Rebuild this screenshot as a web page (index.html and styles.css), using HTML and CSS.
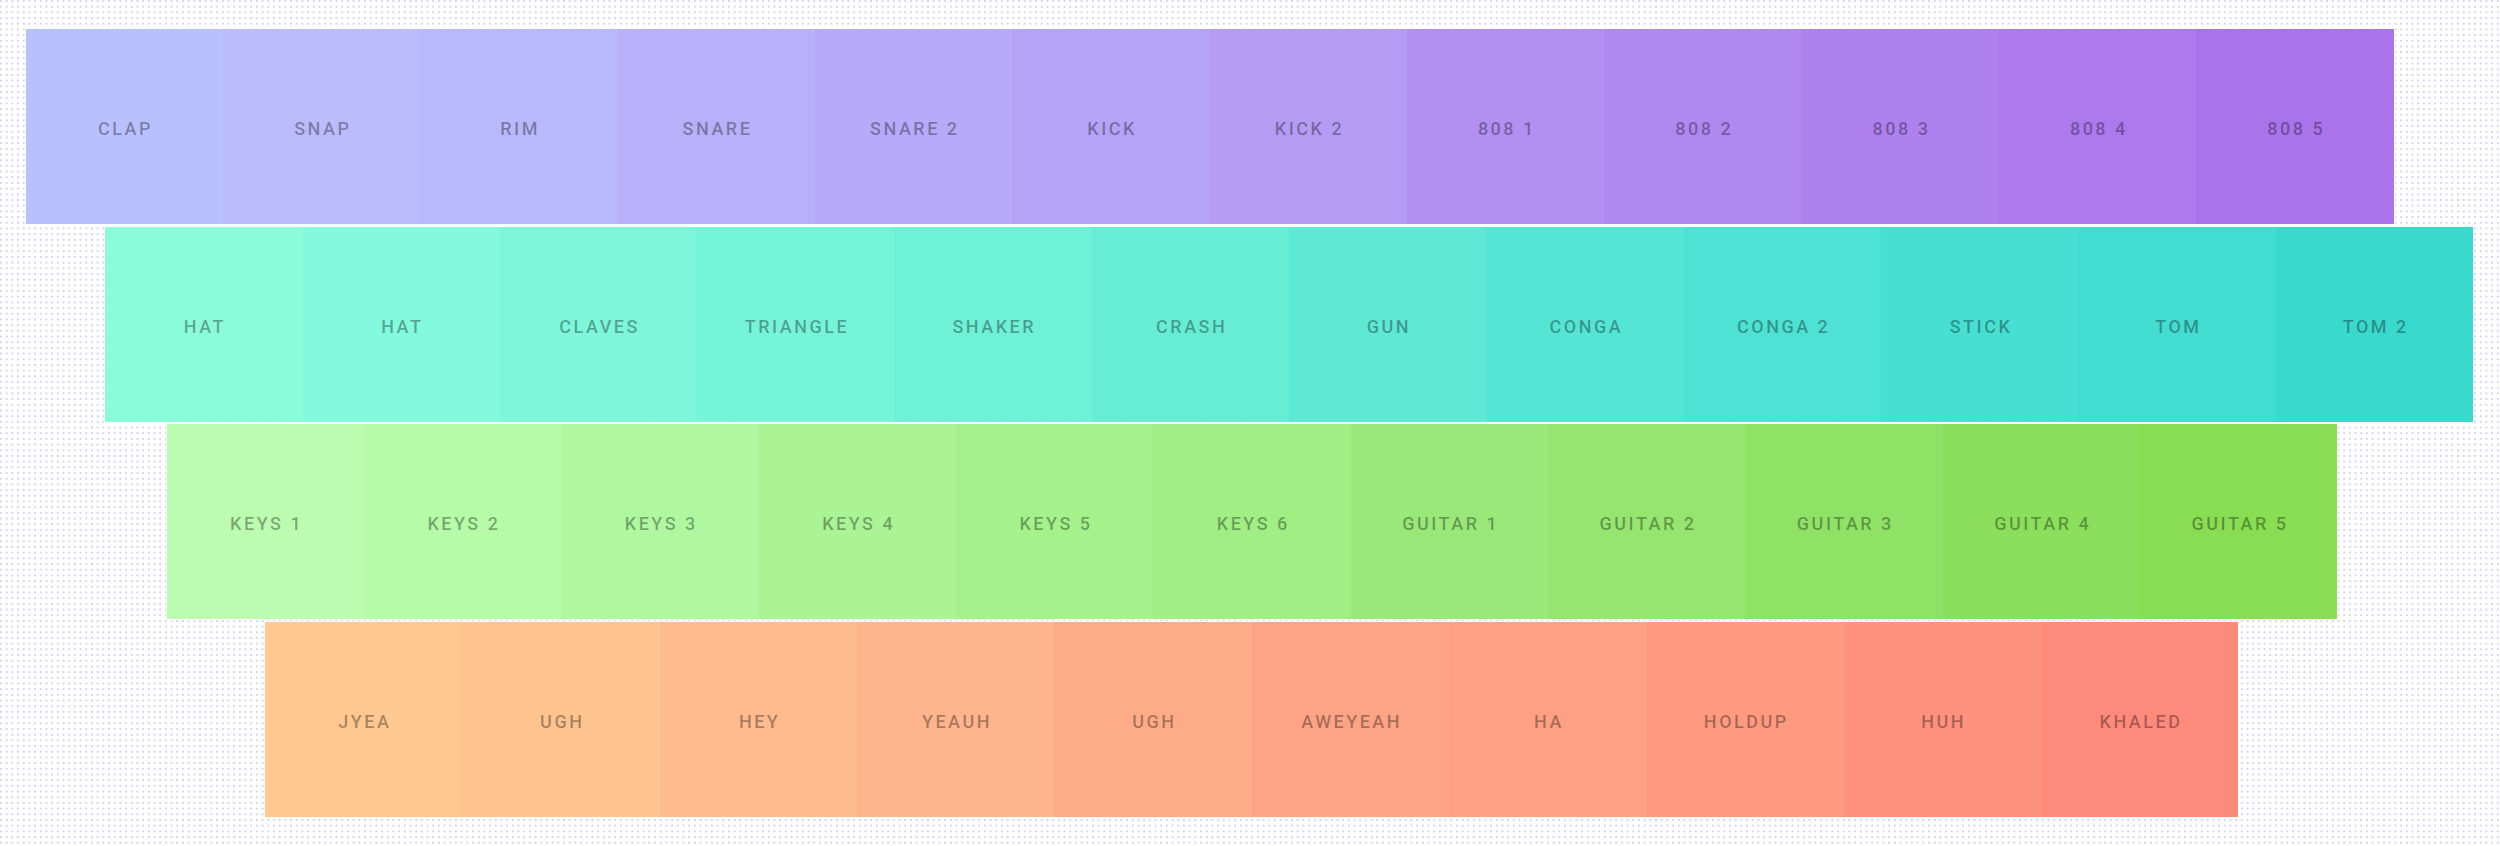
FILE: index.html
```html
<!DOCTYPE html>
<html lang="en">
<head>
<meta charset="utf-8">
<title>Pads</title>
<link rel="stylesheet" href="styles.css">
</head>
<body>
<main class="board">
  <div class="row row-drums">
    <div class="pad">CLAP</div><div class="pad">SNAP</div><div class="pad">RIM</div><div class="pad">SNARE</div><div class="pad">SNARE 2</div><div class="pad">KICK</div><div class="pad">KICK 2</div><div class="pad">808 1</div><div class="pad">808 2</div><div class="pad">808 3</div><div class="pad">808 4</div><div class="pad">808 5</div>
  </div>
  <div class="row row-perc">
    <div class="pad">HAT</div><div class="pad">HAT</div><div class="pad">CLAVES</div><div class="pad">TRIANGLE</div><div class="pad">SHAKER</div><div class="pad">CRASH</div><div class="pad">GUN</div><div class="pad">CONGA</div><div class="pad">CONGA 2</div><div class="pad">STICK</div><div class="pad">TOM</div><div class="pad">TOM 2</div>
  </div>
  <div class="row row-keys">
    <div class="pad">KEYS 1</div><div class="pad">KEYS 2</div><div class="pad">KEYS 3</div><div class="pad">KEYS 4</div><div class="pad">KEYS 5</div><div class="pad">KEYS 6</div><div class="pad">GUITAR 1</div><div class="pad">GUITAR 2</div><div class="pad">GUITAR 3</div><div class="pad">GUITAR 4</div><div class="pad">GUITAR 5</div>
  </div>
  <div class="row row-vox">
    <div class="pad">JYEA</div><div class="pad">UGH</div><div class="pad">HEY</div><div class="pad">YEAUH</div><div class="pad">UGH</div><div class="pad">AWEYEAH</div><div class="pad">HA</div><div class="pad">HOLDUP</div><div class="pad">HUH</div><div class="pad">KHALED</div>
  </div>
</main>
</body>
</html>
```

FILE: styles.css
```css
html, body {
  margin: 0;
  padding: 0;
}

body {
  width: 2500px;
  height: 846px;
  overflow: hidden;
  background-color: #ffffff;
  background-image: radial-gradient(circle at 1px 1px, #d2d2f2 0.85px, rgba(255,255,255,0) 1.25px);
  background-size: 5.7px 5.7px;
  font-family: Roboto, "Liberation Sans", sans-serif;
}

.board {
  display: flex;
  flex-direction: column;
  align-items: flex-start;
  gap: 2.6px;
  padding-top: 29px;
}

.row {
  display: flex;
  flex-wrap: nowrap;
  box-shadow: 0 0 0 1px rgba(255,255,255,0.85);
}

.row-drums { margin-left: 25.5px; box-shadow: 0 0 0 1px rgba(255,255,255,0.85), inset 0 -1px 0 rgba(120,90,220,0.25); }
.row-perc  { margin-left: 105px; }
.row-keys  { margin-left: 166.7px; }
.row-vox   { margin-left: 265px; }

.pad {
  flex: 0 0 auto;
  width: 197.35px;
  height: 195px;
  display: flex;
  align-items: center;
  justify-content: center;
  padding-top: 4px;
  box-sizing: border-box;
  font-size: 18px;
  font-weight: 500;
  letter-spacing: 2.5px;
  text-indent: 2.5px;
  color: rgba(0, 0, 0, 0.34);
  white-space: nowrap;
}

/* drums row */
.row-drums .pad:nth-child(1)  { background: #b9c0fe; }
.row-drums .pad:nth-child(2)  { background: #bcbcfc; }
.row-drums .pad:nth-child(3)  { background: #b9b8fb; }
.row-drums .pad:nth-child(4)  { background: #b8b1f9; }
.row-drums .pad:nth-child(5)  { background: #b7aaf8; }
.row-drums .pad:nth-child(6)  { background: #b5a3f7; }
.row-drums .pad:nth-child(7)  { background: #b49cf4; }
.row-drums .pad:nth-child(8)  { background: #b28ff0; }
.row-drums .pad:nth-child(9)  { background: #b088ef; }
.row-drums .pad:nth-child(10) { background: #ae81ee; }
.row-drums .pad:nth-child(11) { background: #ac7aec; }
.row-drums .pad:nth-child(12) { background: #a974ea; }

/* percussion row */
.row-perc .pad:nth-child(1)  { background: #8afcd9; }
.row-perc .pad:nth-child(2)  { background: #82fadb; }
.row-perc .pad:nth-child(3)  { background: #7df6d9; }
.row-perc .pad:nth-child(4)  { background: #75f4d8; }
.row-perc .pad:nth-child(5)  { background: #6ef1d7; }
.row-perc .pad:nth-child(6)  { background: #67edd6; }
.row-perc .pad:nth-child(7)  { background: #5ee9d6; }
.row-perc .pad:nth-child(8)  { background: #55e5d4; }
.row-perc .pad:nth-child(9)  { background: #4de2d3; }
.row-perc .pad:nth-child(10) { background: #46dfd1; }
.row-perc .pad:nth-child(11) { background: #42dcd0; }
.row-perc .pad:nth-child(12) { background: #3ad9ce; }

/* keys row */
.row-keys .pad:nth-child(1)  { background: #bcfcb0; }
.row-keys .pad:nth-child(2)  { background: #b5fba8; }
.row-keys .pad:nth-child(3)  { background: #b0f8a0; }
.row-keys .pad:nth-child(4)  { background: #abf495; }
.row-keys .pad:nth-child(5)  { background: #a5f28c; }
.row-keys .pad:nth-child(6)  { background: #a0ee84; }
.row-keys .pad:nth-child(7)  { background: #9ae87a; }
.row-keys .pad:nth-child(8)  { background: #96e570; }
.row-keys .pad:nth-child(9)  { background: #90e266; }
.row-keys .pad:nth-child(10) { background: #8cdf5c; }
.row-keys .pad:nth-child(11) { background: #89dd52; }

/* vocals row */
.row-vox .pad:nth-child(1)  { background: #fec890; }
.row-vox .pad:nth-child(2)  { background: #fec490; }
.row-vox .pad:nth-child(3)  { background: #febb8d; }
.row-vox .pad:nth-child(4)  { background: #feb48c; }
.row-vox .pad:nth-child(5)  { background: #feac88; }
.row-vox .pad:nth-child(6)  { background: #fea486; }
.row-vox .pad:nth-child(7)  { background: #fea084; }
.row-vox .pad:nth-child(8)  { background: #fe9a80; }
.row-vox .pad:nth-child(9)  { background: #fe927e; }
.row-vox .pad:nth-child(10) { background: #fe8a7c; }
```
